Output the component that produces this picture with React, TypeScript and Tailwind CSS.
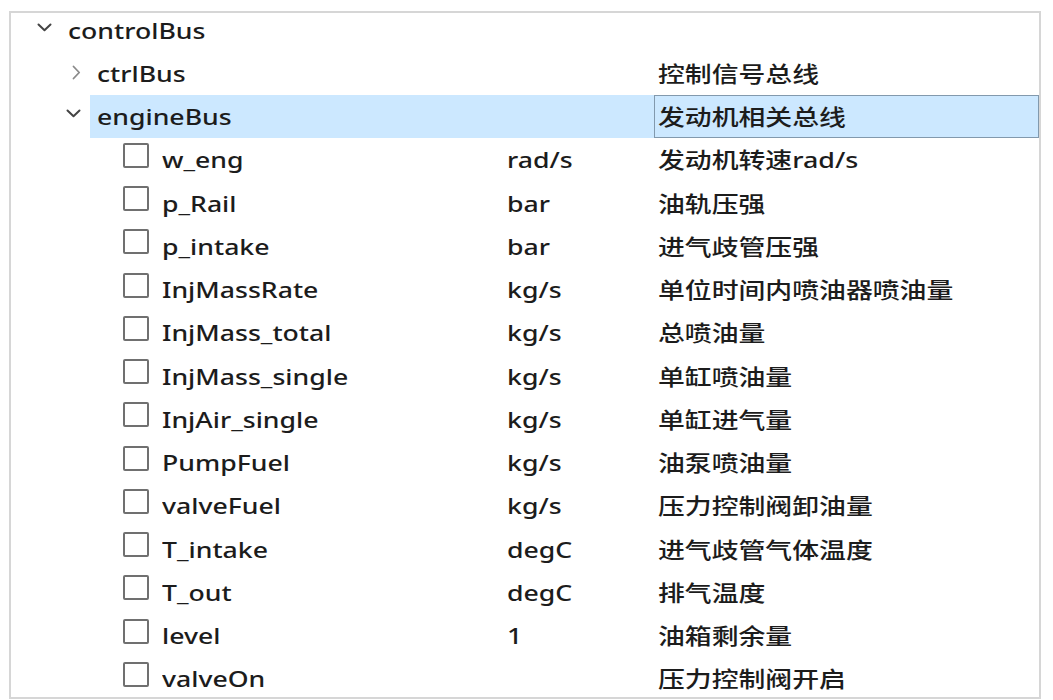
import React from "react";

type Leaf = { name: string; unit: string; desc: string };

const leaves: Leaf[] = [
  { name: "w_eng", unit: "rad/s", desc: "发动机转速rad/s" },
  { name: "p_Rail", unit: "bar", desc: "油轨压强" },
  { name: "p_intake", unit: "bar", desc: "进气歧管压强" },
  { name: "InjMassRate", unit: "kg/s", desc: "单位时间内喷油器喷油量" },
  { name: "InjMass_total", unit: "kg/s", desc: "总喷油量" },
  { name: "InjMass_single", unit: "kg/s", desc: "单缸喷油量" },
  { name: "InjAir_single", unit: "kg/s", desc: "单缸进气量" },
  { name: "PumpFuel", unit: "kg/s", desc: "油泵喷油量" },
  { name: "valveFuel", unit: "kg/s", desc: "压力控制阀卸油量" },
  { name: "T_intake", unit: "degC", desc: "进气歧管气体温度" },
  { name: "T_out", unit: "degC", desc: "排气温度" },
  { name: "level", unit: "1", desc: "油箱剩余量" },
  { name: "valveOn", unit: "", desc: "压力控制阀开启" },
];

function Latin({ children }: { children: React.ReactNode }) {
  return (
    <span className="inline-block origin-left scale-x-[1.21] whitespace-nowrap font-['Noto_Sans','Open_Sans',sans-serif] font-medium">
      {children}
    </span>
  );
}

function Cjk({ children }: { children: React.ReactNode }) {
  return (
    <span className="inline-block origin-left scale-x-[1.22] whitespace-nowrap font-['Noto_Sans','Noto_Sans_CJK_SC',sans-serif] font-medium">
      {children}
    </span>
  );
}

function ChevronDown() {
  return (
    <svg width="15" height="9" viewBox="0 0 15 9" className="-mt-[6px]">
      <polyline
        points="1.5,1.5 7.5,7.2 13.5,1.5"
        fill="none"
        stroke="#444444"
        strokeWidth="2"
        strokeLinecap="round"
        strokeLinejoin="round"
      />
    </svg>
  );
}

function ChevronRight() {
  return (
    <svg width="9" height="15" viewBox="0 0 9 15" className="-mt-[1px]">
      <polyline
        points="1.5,1.5 7.2,7.5 1.5,13.5"
        fill="none"
        stroke="#8a8a8a"
        strokeWidth="1.8"
        strokeLinecap="round"
        strokeLinejoin="round"
      />
    </svg>
  );
}

function BranchRow({
  level,
  open,
  name,
  desc,
  selected,
}: {
  level: number;
  open: boolean;
  name: string;
  desc: string;
  selected?: boolean;
}) {
  return (
    <div className="flex h-[43.25px] items-stretch">
      <div
        className={level === 0 ? "w-[24px] shrink-0" : "w-[53px] shrink-0"}
      />
      <div
        className={
          open
            ? "flex w-[26px] shrink-0 items-center pl-[2px]"
            : "flex w-[26px] shrink-0 items-center pl-[8px]"
        }
      >
        {open ? <ChevronDown /> : <ChevronRight />}
      </div>
      <div
        className={
          selected
            ? "flex flex-1 items-center bg-[#cce8ff] pl-[7px]"
            : "flex flex-1 items-center pl-[7px]"
        }
      >
        <Latin>{name}</Latin>
      </div>
      <div
        className={
          selected
            ? "flex w-[153px] shrink-0 items-center bg-[#cce8ff]"
            : "flex w-[153px] shrink-0 items-center"
        }
      />
      <div
        className={
          selected
            ? "flex w-[385px] shrink-0 items-center border border-[#8299ad] bg-[#cce8ff] pl-[3px]"
            : "flex w-[385px] shrink-0 items-center pl-[4px]"
        }
      >
        {desc && <Cjk>{desc}</Cjk>}
      </div>
    </div>
  );
}

function LeafRow({ leaf }: { leaf: Leaf }) {
  return (
    <div className="flex h-[43.25px] items-stretch">
      <div className="w-[108px] shrink-0" />
      <div className="flex flex-1 items-center pl-[4px]">
        <div className="-mt-[9px] mr-[13px] h-[25px] w-[26px] shrink-0 rounded-[2px] border-2 border-[#707070] bg-white" />
        <Latin>{leaf.name}</Latin>
      </div>
      <div className="flex w-[147px] shrink-0 items-center">
        {leaf.unit && <Latin>{leaf.unit}</Latin>}
      </div>
      <div className="flex w-[385px] shrink-0 items-center pl-[4px]">
        <Cjk>{leaf.desc}</Cjk>
      </div>
    </div>
  );
}

export default function App() {
  return (
    <div className="h-[700px] w-[1053px] overflow-hidden bg-white pl-[9px] pt-[11px] font-['Open_Sans','Noto_Sans_CJK_SC',sans-serif] text-[22px] text-[#1c1c1c]">
      <div className="h-[688px] w-[1032px] overflow-hidden border-2 border-[#d6d6d6]">
        <div className="mt-[-4.6px] flex flex-col">
          <BranchRow level={0} open name="controlBus" desc="" />
          <BranchRow level={1} open={false} name="ctrlBus" desc="控制信号总线" />
          <BranchRow level={1} open name="engineBus" desc="发动机相关总线" selected />
          {leaves.map((l) => (
            <LeafRow key={l.name} leaf={l} />
          ))}
        </div>
      </div>
    </div>
  );
}
